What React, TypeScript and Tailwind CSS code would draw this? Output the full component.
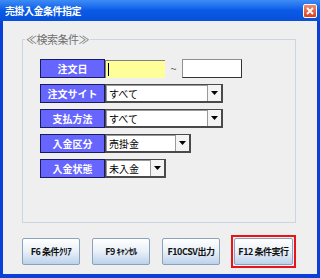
import React from 'react'

const jp = { fontFamily: '"Noto Sans CJK JP", "Noto Sans", sans-serif' }

function Label({ text }: { text: string }) {
  return (
    <div className="flex h-[19px] w-[65px] shrink-0 items-center justify-center border border-[#1a1a5e] bg-[#6666ff] text-[10px] font-bold leading-none text-white">
      {text}
    </div>
  )
}

function Select({ value, width }: { value: string; width: number }) {
  return (
    <div
      className="flex h-[19px] shrink-0 border border-[#4a4a4a] border-b-2 border-r-2 bg-white"
      style={{ width }}
    >
      <div className="flex flex-1 items-center border-l border-t border-[#9a9a9a] pl-[2px] text-[10px] leading-none text-black">
        {value}
      </div>
      <div className="flex w-[14px] items-center justify-center border-l border-[#9a9a9a] bg-[#f4f4f4]">
        <svg width="7" height="4" viewBox="0 0 7 4">
          <path d="M0 0h7L3.5 4z" fill="#000" />
        </svg>
      </div>
    </div>
  )
}

function Btn({ text }: { text: string }) {
  return (
    <div className="flex h-[27px] w-[59px] items-center justify-center rounded-[2px] border border-[#8aa2bb] bg-gradient-to-b from-white via-[#e8f0f8] to-[#bcd2ea] text-[9px] font-bold leading-none tracking-tighter text-[#111]">
      {text}
    </div>
  )
}

export default function App() {
  return (
    <div className="flex h-[278px] w-[320px] flex-col overflow-hidden bg-[#0a3fd8]" style={jp}>
      {/* title bar */}
      <div className="flex h-[21px] shrink-0 items-center justify-between bg-gradient-to-b from-[#3d8cf5] via-[#0a5ae8] to-[#0850d8] pl-[5px] pr-[3px]">
        <span className="text-[10px] font-bold leading-none tracking-[-0.5px] text-white">売掛入金条件指定</span>
        <div className="flex h-[14px] w-[14px] items-center justify-center rounded-[2px] border border-white bg-gradient-to-b from-[#f08a6a] to-[#d8401c]">
          <svg width="8" height="8" viewBox="0 0 8 8">
            <path d="M1 1l6 6M7 1L1 7" stroke="#fff" strokeWidth="1.8" />
          </svg>
        </div>
      </div>

      {/* body */}
      <div className="mx-[3px] mb-[4px] flex flex-1 flex-col bg-[#efefef] pl-[19px] pr-[21px]">
        <fieldset className="mt-[13px] h-[189px] border border-[#ccd6e0] pl-[17px]">
          <legend className="-ml-[15px] px-[1px] text-[11px] leading-none tracking-[-0.5px] text-[#707070]">≪検索条件≫</legend>
          <div className="mt-[14px] flex flex-col gap-[6px]">
            <div className="flex items-center">
              <Label text="注文日" />
              <div className="relative h-[18px] w-[60px] border-l border-t border-[#808080] bg-[#ffff99]">
                <div className="absolute left-[2px] top-[2px] h-[13px] w-px bg-black" />
              </div>
              <span className="w-[17px] text-center text-[11px] leading-none text-[#555]">~</span>
              <div className="h-[19px] w-[60px] border border-[#333] border-l-[#909090] border-t-[#909090] bg-white" />
            </div>
            <div className="flex items-center">
              <Label text="注文サイト" />
              <Select value="すべて" width={118} />
            </div>
            <div className="flex items-center">
              <Label text="支払方法" />
              <Select value="すべて" width={118} />
            </div>
            <div className="flex items-center">
              <Label text="入金区分" />
              <Select value="売掛金" width={86} />
            </div>
            <div className="flex items-center">
              <Label text="入金状態" />
              <Select value="未入金" width={61} />
            </div>
          </div>
        </fieldset>

        <div className="mt-[12px] flex items-center gap-[12px]">
          <Btn text="F6 条件ｸﾘｱ" />
          <Btn text="F9 ｷｬﾝｾﾙ" />
          <Btn text="F10CSV出力" />
          <div className="-ml-[1px] border-2 border-[#e8141c] p-px">
            <Btn text="F12 条件実行" />
          </div>
        </div>
      </div>
    </div>
  )
}
